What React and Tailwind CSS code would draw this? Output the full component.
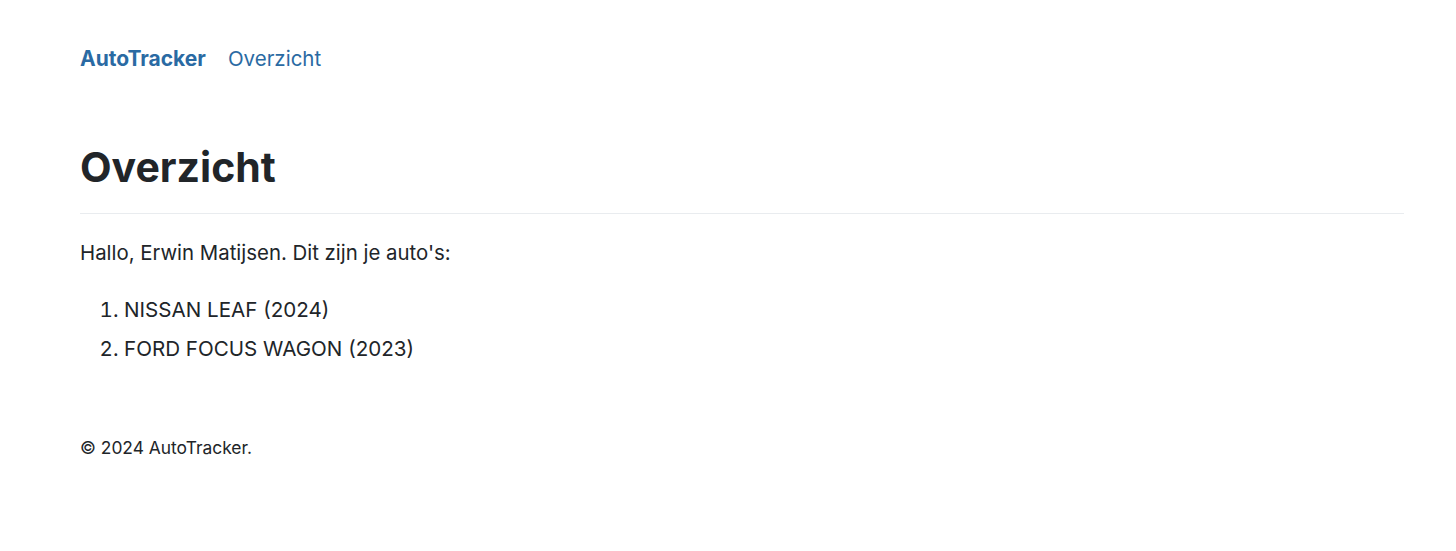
export default function App() {
  return (
    <div className="min-h-[551px] bg-white text-[#212529]" style={{ fontFamily: 'Inter, "Noto Sans", sans-serif' }}>
      <div className="pl-[80px] pr-[52px]">
        <nav className="flex items-center gap-[22px] h-[118px]">
          <a className="text-[21px] font-bold text-[#2a6aa3]">AutoTracker</a>
          <a className="text-[20.5px] text-[#2a6aa3]">Overzicht</a>
        </nav>
        <h1 className="text-[41px] font-bold leading-[48px] mt-[25px]">Overzicht</h1>
        <hr className="border-t border-[#e9ecef] mt-[22px]" />
        <p className="text-[20.4px] leading-[30px] mt-[24px]">Hallo, Erwin Matijsen. Dit zijn je auto's:</p>
        <ol className="list-decimal pl-[44px] mt-[22px] text-[20.6px] leading-[39px]">
          <li>NISSAN LEAF (2024)</li>
          <li>FORD FOCUS WAGON (2023)</li>
        </ol>
        <footer className="text-[17.4px] leading-[28px] mt-[66px]">© 2024 AutoTracker.</footer>
      </div>
    </div>
  );
}
